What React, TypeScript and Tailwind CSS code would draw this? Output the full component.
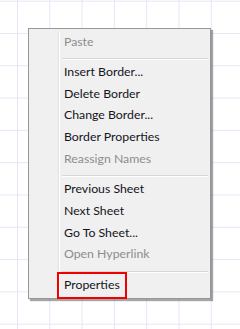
const groups: { label: string; disabled?: boolean }[][] = [
  [{ label: "Paste", disabled: true }],
  [
    { label: "Insert Border..." },
    { label: "Delete Border" },
    { label: "Change Border..." },
    { label: "Border Properties" },
    { label: "Reassign Names", disabled: true },
  ],
  [
    { label: "Previous Sheet" },
    { label: "Next Sheet" },
    { label: "Go To Sheet..." },
    { label: "Open Hyperlink", disabled: true },
  ],
  [{ label: "Properties" }],
];

const Separator = () => (
  <div className="h-[8.5px] pl-[31px] pt-[5px]">
    <div className="h-px bg-[#d7d7d7]" />
    <div className="h-px bg-white" />
  </div>
);

export default function App() {
  return (
    <div className="w-[240px] h-[329px] overflow-hidden bg-white bg-[linear-gradient(to_right,#e6e6f6_1px,transparent_1px),linear-gradient(to_bottom,#e6e6f6_1px,transparent_1px)] bg-[size:32.3px_32.3px] bg-[position:17px_0.7px] pt-[28px] pl-[28px] font-['Lato',sans-serif]">
      <div className="relative w-[183px] h-[271px] border border-[#979797] bg-[#f0f0f0] p-[2px] shadow-[2px_2px_1px_rgba(0,0,0,0.35)]">
        <div className="absolute top-[2px] bottom-[2px] left-[29px] w-[2px] flex">
          <div className="w-px bg-[#e2e3e3]" />
          <div className="w-px bg-white" />
        </div>
        <div className="relative">
          {groups.map((group, gi) => (
            <div key={gi}>
              {gi > 0 && <Separator />}
              {group.map((item) => (
                <div
                  key={item.label}
                  className={`h-[21.75px] flex items-center pl-[33px] text-[12.3px] leading-none ${
                    item.disabled ? "text-[#8d8d8d]" : "text-[#14141c]"
                  }`}
                >
                  {item.label}
                </div>
              ))}
            </div>
          ))}
        </div>
        <div className="absolute left-[28px] top-[243px] w-[70px] h-[27px] border-2 border-[#f00000]" />
      </div>
    </div>
  );
}
